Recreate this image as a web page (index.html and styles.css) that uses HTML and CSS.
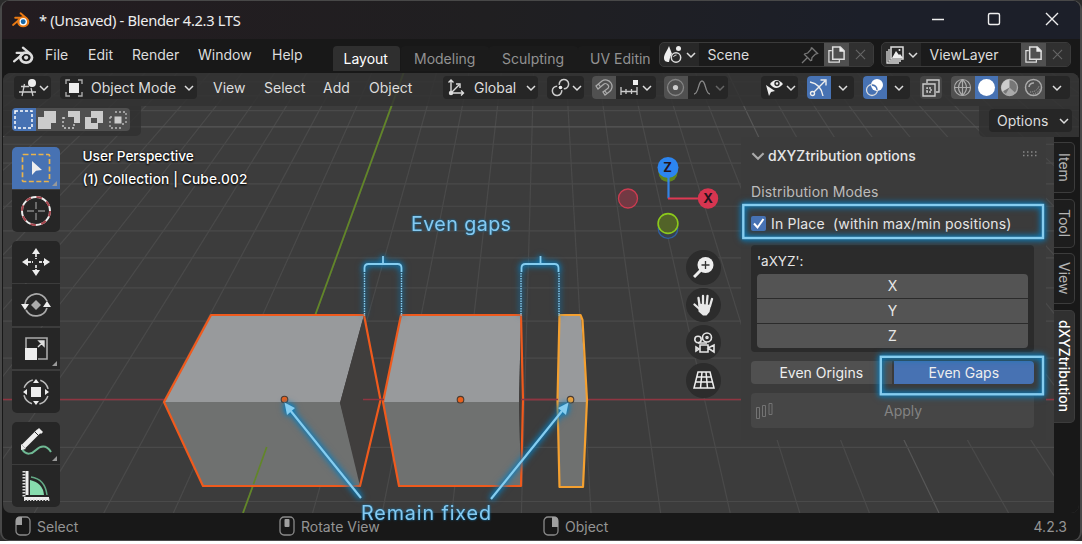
FILE: index.html
```
<!DOCTYPE html>
<html lang="en">
<head>
<meta charset="utf-8">
<title>Blender 4.2.3 LTS</title>
<link rel="stylesheet" href="styles.css">
</head>
<body>
<svg class="defs" width="0" height="0">
  <symbol id="chev" viewBox="0 0 10 10"><path d="M1 3l4 4 4-4" fill="none" stroke="currentColor" stroke-width="1.5"/></symbol>
  <symbol id="copy" viewBox="0 0 20 20"><path d="M5 6H2v12h11v-3" fill="none" stroke="#ddd" stroke-width="1.3"/><path d="M6 2h8l4 4v9H6z" fill="none" stroke="#ddd" stroke-width="1.6"/><path d="M13 1.5V7h5.500z" fill="#eee"/></symbol>
  <symbol id="close" viewBox="0 0 12 12"><path d="M1 1l10 10M11 1L1 11" fill="none" stroke="currentColor" stroke-width="1.2"/></symbol>
  <symbol id="blender" viewBox="0 0 20 18"><path d="M1 14.500L9 8M3.500 6.500H12M9.500 1.500L16 7" fill="none" stroke="currentColor" stroke-width="2.200" stroke-linecap="round"/><ellipse cx="12.500" cy="11" rx="5.600" ry="4.800" fill="none" stroke="currentColor" stroke-width="2.600"/></symbol>
</svg>
<div class="window">
  <header class="titlebar">
    <svg class="logo orange" width="18" height="16" viewBox="0 0 20 18"><use href="#blender"/><circle cx="12.500" cy="11" r="4.300" fill="#fff"/><circle cx="12.500" cy="11" r="2.800" fill="#1768a8"/></svg>
    <span class="title">* (Unsaved) - Blender 4.2.3 LTS</span>
    <svg class="winbtns" width="128" height="16" viewBox="0 0 128 16" fill="none" stroke="#eee" stroke-width="1.400"><path d="M1 8.500h12M115 2l12 12M127 2L115 14"/><rect x="57.500" y="2.500" width="11" height="11" rx="1.500"/></svg>
  </header>

  <nav class="topbar">
    <svg class="applogo" width="21" height="19" viewBox="0 0 20 18"><use href="#blender"/><circle cx="12.500" cy="11" r="2" fill="#ddd"/></svg>
    <span class="menu m-file">File</span><span class="menu m-edit">Edit</span><span class="menu m-render">Render</span><span class="menu m-window">Window</span><span class="menu m-help">Help</span>
    <div class="tabs"><span class="tab active">Layout</span><span class="tab t2">Modeling</span><span class="tab t3">Sculpting</span><span class="tab t4">UV Editing</span></div>
    <div class="selector scene">
      <span class="pick"><svg width="20" height="20" viewBox="0 0 20 20"><path d="M6 1C4 6 1 9 1 13c0 3 2 4 5 4 1-5 2-7 3-8z" fill="#eee"/><circle cx="15.500" cy="3.500" r="2.500" fill="#eee"/><circle cx="13" cy="12.500" r="4.700" fill="#282828" stroke="#ddd" stroke-width="1.500"/><path d="M10.500 12a3 3 0 0 1 3-2" stroke="#ddd" fill="none"/></svg><svg class="chev"><use href="#chev"/></svg></span>
      <span class="field">Scene<svg width="18" height="18" viewBox="0 0 18 18" fill="none" stroke="#777" stroke-width="1.300"><path d="M1 17l5.500-5.500M3 8l7 7M10.500 1.500l6 6-2 .5-3.500 3.500-.5 3.500M3.200 8l3.500-1L10 3.500l.5-2"/></svg></span>
      <span class="new"><svg width="19" height="19"><use href="#copy"/></svg></span>
      <span class="del"><svg width="11" height="11"><use href="#close"/></svg></span>
    </div>
    <div class="selector layer">
      <span class="pick"><svg width="20" height="20" viewBox="0 0 20 20" fill="none" stroke="#ddd" stroke-width="1.300"><path d="M2 6v12h12M4 4v12h12"/><rect x="6" y="2" width="12" height="12" stroke-width="1.500"/><path d="M7 13l4-7 3 4 1-1 3 4z" fill="#eee" stroke="none"/><circle cx="14.500" cy="5" r="1" fill="#eee" stroke="none"/></svg><svg class="chev"><use href="#chev"/></svg></span>
      <span class="field">ViewLayer</span>
      <span class="new"><svg width="19" height="19"><use href="#copy"/></svg></span>
      <span class="del"><svg width="11" height="11"><use href="#close"/></svg></span>
    </div>
  </nav>

  <main class="viewport">
    <svg class="scene3d" width="1076" height="440" viewBox="3 73 1076 440">
      <g id="grid" fill="none" stroke="#4a4a4a" stroke-width="1.200"></g>
      <path d="M3 399.500H1054" stroke="#8f3541" stroke-width="1.500"/>
      <path d="M403.500 73L243 513" stroke="#628629" stroke-width="1.800"/>
      <g stroke-linejoin="round">
        <path d="M211 315h153L340 403H164z" fill="#989a9c"/><path d="M164 402h176l21 84H203z" fill="#6f7170"/><path d="M364 315l16 83-20 88-20-83z" fill="#403e3d"/>
        <path d="M401 315h120l-2 88H383z" fill="#989a9c"/><path d="M383 402h136l2 84H399z" fill="#6f7170"/><path d="M521 315l2 85-2 86-2-83z" fill="#403e3d"/>
        <path d="M559 315h22l6 88h-29z" fill="#989a9c"/><path d="M558 402h29l-4 85h-24z" fill="#6f7170"/>
        <path d="M266.700 447L253.500 484" stroke="#628629" stroke-width="1.700"/>
        <path d="M211 315H364L380.500 400 360 486H203L164 402zM401 315H521L523 400 521 486H399L383 402z" fill="none" stroke="#ef5a1d" stroke-width="2.200"/>
        <path d="M559.500 315h21l2 5 4.500 80-4 87h-23.500l-2-87z" fill="none" stroke="#f4a030" stroke-width="2.200"/>
      </g>
      <path d="M363 399.500h21M521 399.500h37" stroke="#8f3541" stroke-width="1.300"/>
      <g stroke="#4b3b30" stroke-width="1.100" fill="#e9601c"><circle cx="284.500" cy="399.500" r="3.300"/><circle cx="460.500" cy="399.700" r="3.300"/><circle cx="570.500" cy="399.700" r="3.300" fill="#f0a23a"/></g>
    </svg>

    <div class="header">
      <span class="box w37 ed"><svg width="20" height="20" viewBox="0 0 20 20" fill="none" stroke="#ccc" stroke-width="1.300"><path d="M3 8.500h8M1 14h17M6.500 6L4 18M13 10l2 8"/><circle cx="14" cy="5" r="4" fill="#eee" stroke="none"/></svg><svg class="chev"><use href="#chev"/></svg></span>
      <span class="box mode"><svg width="18" height="18" viewBox="0 0 18 18"><path d="M1 5V1h4M13 1h4v4M17 13v4h-4M5 17H1v-4" fill="none" stroke="#aaa" stroke-width="1.400"/><path d="M4 4h10v10H4z" fill="#eee"/></svg><b>Object Mode</b><svg class="chev"><use href="#chev"/></svg></span>
      <span class="menu h-view">View</span><span class="menu h-select">Select</span><span class="menu h-add">Add</span><span class="menu h-object">Object</span>
      <span class="box global"><svg width="19" height="19" viewBox="0 0 19 19" fill="none" stroke="#ddd" stroke-width="1.400"><path d="M4 3v12h12M4 15L12 7M1.500 4.500L4 2l2.500 2.500M14 12.500l2.500 2.500-2.500 2.500"/><path d="M9 6h4v4"/><circle cx="4" cy="15" r="1.500" fill="#ddd"/></svg><b>Global</b><svg class="chev"><use href="#chev"/></svg></span>
      <span class="box w37 pivot"><svg width="19" height="19" viewBox="0 0 19 19" fill="none" stroke="#ccc" stroke-width="1.500"><path d="M8.300 6.800A4.700 4.700 0 1 1 12.800 10.800M10.700 12.200A4.700 4.700 0 1 1 6.200 8.200"/><circle cx="9.500" cy="9.500" r="1.800" fill="#eee" stroke="none"/></svg><svg class="chev"><use href="#chev"/></svg></span>
      <span class="box snap"><span class="cell lit"><svg width="19" height="19" viewBox="0 0 19 19" fill="none" stroke="#aaa" stroke-width="1.300"><path d="M2 8l6-5c3-2 7-1 9 2s1 7-2 9l-4 3-2-3 4-3c2-1 2-3 1-4s-3-2-4-1l-6 5zM4.500 6l2 3M13 16l-2-3"/></svg></span><svg width="18" height="18" viewBox="0 0 18 18" fill="none" stroke="#ccc" stroke-width="1.300"><path d="M1 8v8M6 10v5M11.500 10v5M17 8v8M1 12.500h16"/><path d="M13 1h5v5h-5z" fill="#eee" stroke="none"/></svg><svg class="chev"><use href="#chev"/></svg></span>
      <span class="box prop"><span class="cell lit"><svg width="19" height="19" viewBox="0 0 19 19"><circle cx="9.500" cy="9.500" r="8" fill="none" stroke="#858585" stroke-width="1.300"/><circle cx="9.500" cy="9.500" r="2.600" fill="#ccc"/></svg></span><svg width="17" height="17" viewBox="0 0 17 17"><path d="M1 15c5 0 4-13 8-13s3 13 8 13" fill="none" stroke="#888" stroke-width="1.300"/></svg><svg class="chev dim"><use href="#chev"/></svg></span>
      <span class="box w37 eye"><svg width="19" height="19" viewBox="0 0 19 19"><path d="M5 6q6-8 13 0-7 8-13 0z" fill="#eee"/><circle cx="12" cy="5.500" r="2.700" fill="#282828"/><circle cx="12" cy="5.500" r="1.200" fill="#eee"/><path d="M1 7l9 6-4 1-2 4z" fill="#eee"/></svg><svg class="chev"><use href="#chev"/></svg></span>
      <span class="box pair giz"><span class="cell blue"><svg width="19" height="19" viewBox="0 0 19 19" fill="none" stroke="#eee" stroke-width="1.400"><path d="M1 4q11 2 13 14M4 15L16 3M11.500 2H17v5.500"/><circle cx="3.500" cy="15.500" r="2" fill="#4772b3"/></svg></span><svg class="chev"><use href="#chev"/></svg></span>
      <span class="box pair ovl"><span class="cell blue"><svg width="19" height="19" viewBox="0 0 19 19"><circle cx="12" cy="7" r="6" fill="#fff"/><circle cx="7" cy="12" r="5.500" fill="none" stroke="#ddd" stroke-width="1.300"/><path d="M7 7a5.500 5.500 0 0 1 5 5" fill="none" stroke="#4772b3" stroke-width="1.300"/></svg></span><svg class="chev"><use href="#chev"/></svg></span>
      <span class="box xray"><svg width="18" height="18" viewBox="0 0 18 18" fill="none" stroke="#ccc" stroke-width="1.400"><path d="M5 4V1h12v12h-3M1 5h12v12H1z"/><path d="M5 13V9h4v4z" stroke-dasharray="2 1"/></svg></span>
      <span class="box shade">
        <span class="cell lit"><svg width="19" height="19" viewBox="0 0 19 19" fill="none" stroke="#aaa" stroke-width="1.200"><circle cx="9.500" cy="9.500" r="8"/><path d="M1.500 9.500h16M9.500 1.500v16M9.500 1.500q-8 8 0 16M9.500 1.500q8 8 0 16"/></svg></span>
        <span class="cell blue"><svg width="19" height="19" viewBox="0 0 19 19"><circle cx="9.500" cy="9.500" r="8.500" fill="#fff"/></svg></span>
        <span class="cell lit"><svg width="19" height="19" viewBox="0 0 19 19"><circle cx="9.500" cy="9.500" r="8" fill="#777" stroke="#aaa" stroke-width="1.300"/><path d="M9.500 9.500V1.500a8 8 0 0 0-7 12z" fill="#ccc"/><path d="M9.500 9.500l6 5.500a8 8 0 0 1-10 1.500z" fill="#aaa"/></svg></span>
        <span class="cell lit"><svg width="19" height="19" viewBox="0 0 19 19" fill="none" stroke="#aaa"><circle cx="9.500" cy="9.500" r="8" stroke-width="1.500"/><path d="M5 9a4.500 4.500 0 0 1 5-4" stroke-width="1.600"/><path d="M6 14q7 0 9-6M9 16q5-1 7-5" stroke-dasharray="1 1"/></svg></span>
        <svg class="chev"><use href="#chev"/></svg>
      </span>
    </div>

    <div class="subheader">
      <div class="selmodes"><div class="row">
        <span class="cell blue"><svg width="19" height="19" viewBox="0 0 19 19"><rect x="1" y="1" width="17" height="17" fill="none" stroke="#fff" stroke-width="1.500" stroke-dasharray="3 2"/></svg></span>
        <span class="cell lit"><svg width="18" height="18"><path d="M6 0h12v12h-5v6H0V6h6z" fill="#ccc"/></svg></span>
        <span class="cell lit"><svg width="18" height="18"><path d="M6 0h12v12h-6V6H6z" fill="#ccc"/><path d="M1 6v11h11v-4M1 7h4" fill="none" stroke="#ccc" stroke-width="1.400" stroke-dasharray="2 2"/></svg></span>
        <span class="cell lit"><svg width="18" height="18"><path d="M6 0h12v12h-5v6H0V6h6zM6 7v5h6V7z" fill="#ccc" fill-rule="evenodd"/></svg></span>
        <span class="cell lit"><svg width="18" height="18"><path d="M5.500 5.500h7v7h-7z" fill="#ccc"/><path d="M6 1h11v11M1 6v11h11M1 6h4M13 13h4" fill="none" stroke="#bbb" stroke-width="1.300" stroke-dasharray="2 2"/></svg></span>
      </div></div>
      <div class="optwrap"><span class="box options">Options<svg class="chev"><use href="#chev"/></svg></span></div>
    </div>

    <div class="stage">
      <div class="toolbar">
        <div class="tgroup">
          <span class="tool on corner"><svg width="30" height="30" viewBox="0 0 30 30"><rect x="1.500" y="1.500" width="27" height="27" fill="none" stroke="#e9b34c" stroke-width="1.700" stroke-dasharray="5 2.500" rx="1"/><path d="M11 8l10 9-6 .8-4 4.200z" fill="#eee"/></svg></span>
          <span class="tool"><svg width="32" height="32" viewBox="0 0 32 32" fill="none"><circle cx="16" cy="16" r="14" stroke="#eee" stroke-width="2"/><circle cx="16" cy="16" r="14" stroke="#a5444c" stroke-width="2" stroke-dasharray="5.500 5.500"/><path d="M16 7v7M16 18v7M7 16h7M18 16h7" stroke="#888" stroke-width="1.400"/></svg></span>
        </div>
        <div class="tgroup">
          <span class="tool"><svg width="30" height="30" viewBox="0 0 30 30"><path d="M15 1l4 6h-8zM15 29l4-6h-8zM1 15l6-4v8zM29 15l-6-4v8z" fill="#eee"/><path d="M15 7v5M15 18v5M7 15h5M18 15h5" stroke="#ddd" stroke-width="1.800" stroke-dasharray="3 1"/></svg></span>
          <span class="tool"><svg width="30" height="30" viewBox="0 0 30 30"><path d="M4 14A11.500 11.500 0 0 1 26 11M26 18A11.500 11.500 0 0 1 5 20" fill="none" stroke="#aaa" stroke-width="1.700"/><path d="M15 10l5 5-5 5-5-5z" fill="#aaa"/><path d="M0 14h8l-4 6zM22 17h8l-4-6z" fill="#eee"/></svg></span>
          <span class="tool corner"><svg width="23" height="23" viewBox="0 0 23 23"><path d="M1 12V1h21v21H13" fill="none" stroke="#aaa" stroke-width="1.600"/><path d="M0 11h12v12H0z" fill="#eee"/><path d="M13 10l5-5M14 4h5v5z" fill="#ddd" stroke="#ddd" stroke-width="1.400"/></svg></span>
          <span class="tool"><svg width="28" height="28" viewBox="0 0 28 28"><circle cx="14" cy="14" r="12.500" fill="none" stroke="#bbb" stroke-width="1.500" stroke-dasharray="12 7.630" stroke-dashoffset="-4"/><path d="M9 9h10v10H9zM14 1l3 4h-6zM14 27l3-4h-6zM1 14l4-3v6zM27 14l-4-3v6z" fill="#eee"/></svg></span>
        </div>
        <div class="tgroup">
          <span class="tool corner"><svg width="32" height="30" viewBox="0 0 32 30"><path d="M2 21c4 7 10 5 14 1s10-6 15 2" fill="none" stroke="#6fb994" stroke-width="2"/><path d="M3.500 18.500L19 3" stroke="#eee" stroke-width="5"/><path d="M1 16l5 5-5 1zM17 2l2-2 4 4-2 2z" fill="#eee"/><path d="M15 4l4 4" stroke="#282828"/></svg></span>
          <span class="tool"><svg width="28" height="31" viewBox="0 0 28 31"><path d="M8 10q13 3 14 15H8z" fill="#87dcae"/><path d="M9 7q14 2 16 18" fill="none" stroke="#63a985" stroke-width="1.500"/><path d="M5 1v24M2 28.500h25" stroke="#eee" stroke-width="3"/><path d="M2 1v27M2 30h26" stroke="#ddd" stroke-width="3" stroke-dasharray="1.400 1.600"/></svg></span>
        </div>
      </div>

      <div class="info"><div>User Perspective</div><div>(1) Collection | Cube.002</div></div>

      <div class="navcol">
        <svg class="gizmo" width="106" height="90" viewBox="615 152 106 90"><circle cx="668" cy="172.500" r="9.500" fill="#60851c"/><circle cx="668" cy="228.500" r="9.800" fill="#38414c" stroke="#315f9f" stroke-width="1.300"/><path d="M668.500 198.500V176" stroke="#3484e4" stroke-width="2.200"/><path d="M668 198.500h36" stroke="#df3953" stroke-width="2.200"/><circle cx="668" cy="167.500" r="10.500" fill="#2c85f0"/><circle cx="708" cy="198.500" r="10.200" fill="#d73550"/><circle cx="628" cy="198.500" r="9.500" fill="#723943" stroke="#cd3c51" stroke-width="1.300"/><circle cx="668" cy="223.500" r="9.900" fill="#526328" stroke="#8cc91c" stroke-width="1.600"/><text x="663.200" y="172" class="axis">Z</text><text x="703.300" y="203" class="axis">X</text></svg>
        <div class="navs">
          <span class="nav"><svg width="22" height="22" viewBox="0 0 22 22"><path d="M1 21l7-7" stroke="#eee" stroke-width="3"/><circle cx="12.500" cy="9" r="8" fill="#eee"/><path d="M8.500 9h8M12.500 5v8" stroke="#333" stroke-width="1.300"/></svg></span>
          <span class="nav"><svg width="22" height="22" viewBox="0 0 22 22"><path d="M6.500 11L5.500 4M10 11V2M13.700 11l.8-9M17 12l2-7M6.500 15l-5-4.500" stroke="#e8e8e8" stroke-width="2.300" stroke-linecap="round"/><path d="M5.400 9.500l12.600 1.500-1.500 7-3 3.500H10l-4.500-4z" fill="#e8e8e8"/></svg></span>
          <span class="nav"><svg width="22" height="22" viewBox="0 0 22 22" fill="none" stroke="#e5e5e5" stroke-width="1.600"><circle cx="14" cy="5.500" r="4.500"/><circle cx="5" cy="7.500" r="3.200"/><path d="M5 11h9M7 13h8v7H7zM15 16l6-3v7z"/><path d="M3 15v4l3-2z"/><circle cx="14" cy="5.500" r="1" /></svg></span>
          <span class="nav"><svg width="22" height="18" viewBox="0 0 22 18" fill="none" stroke="#eee" stroke-width="1.500"><path d="M5 1h12l4 16H1zM4 6h14M2.500 11h17M9 1L7.500 17M13 1l1.500 16"/></svg></span>
        </div>
      </div>

      <aside class="panel">
        <div class="phead"><svg class="chev big"><use href="#chev"/></svg><b>dXYZtribution options</b><svg class="grip" width="14" height="6"><path d="M0 1h14M0 4.500h14" stroke="#888" stroke-width="1.500" stroke-dasharray="1.500 2.500"/></svg></div>
        <div class="plabel">Distribution Modes</div>
        <div class="check"><svg width="15" height="15"><rect width="15" height="15" rx="2" fill="#4772b3"/><path d="M3 7.500l3.500 4L12.500 3" fill="none" stroke="#fff" stroke-width="2"/></svg><span>In Place&nbsp; (within max/min positions)</span></div>
        <div class="pbox"><div class="axyz">'aXYZ':</div><div class="xyz"><span>X</span><span>Y</span><span>Z</span></div></div>
        <div class="even"><span>Even Origins</span><span class="sel">Even Gaps</span></div>
        <div class="apply"><svg width="19" height="18" fill="none" stroke="#737373"><path d="M1.500 5.500h3v11h-3zM7.500 3.500h3v11h-3zM14 1.500h3v11h-3z"/></svg><span>Apply</span></div>
      </aside>

      <div class="sidetabs"><span class="st s1">Item</span><span class="st s2">Tool</span><span class="st s3">View</span><span class="st s4 cur">dXYZtribution</span></div>
    </div>
  </main>

  <footer class="status">
    <svg width="16" height="20" viewBox="0 0 16 20"><rect x="1" y="1" width="14" height="18" rx="4" fill="none" stroke="#8a8a8a" stroke-width="1.300"/><path d="M1 9V4q0-3 3-3h3v8z" fill="#a0a0a0"/></svg><span class="f1">Select</span>
    <svg width="16" height="20" viewBox="0 0 16 20"><rect x="1" y="1" width="14" height="18" rx="4" fill="none" stroke="#8a8a8a" stroke-width="1.300"/><rect x="5.500" y="3" width="5" height="8" rx="1" fill="#a0a0a0"/></svg><span class="f2">Rotate View</span>
    <svg width="16" height="20" viewBox="0 0 16 20"><rect x="1" y="1" width="14" height="18" rx="4" fill="none" stroke="#8a8a8a" stroke-width="1.300"/><path d="M9 1h3q3 0 3 3v7H9z" fill="#a0a0a0"/></svg><span class="f3">Object</span>
    <span class="ver">4.2.3</span>
  </footer>
</div>

<svg class="notes" width="1082" height="544" viewBox="0 0 1082 544">
  <g class="glow" fill="none" stroke="#85cdf0">
    <rect x="743.300" y="205" width="299.700" height="33" stroke-width="2.400"/>
    <rect x="880.800" y="356.800" width="162.200" height="37.500" stroke-width="2.400"/>
    <g stroke-width="1.800"><path d="M364.500 272v-4q0-4 4-4h29q4 0 4 4v4M383 264v-8"/><path d="M521.500 272v-4q0-4 4-4h29q4 0 4 4v4M540.500 264v-8"/></g>
    <path d="M364.500 273v43M401.500 273v43M521 273v43M559 273v43" stroke-width="1.400" stroke-dasharray="1.500 1"/>
    <path d="M361 498L290 410M491 499L562 411" stroke-width="2.200"/>
    <path d="M284.500 402.500l10.500 5.500-8 7zM568.500 402.500l-10.500 5.500 8 7z" fill="#85cdf0" stroke="none"/>
  </g>
  <text class="note" x="411" y="231" textLength="100">Even gaps</text>
  <text class="note" x="361" y="520" textLength="130">Remain fixed</text>
</svg>
<script src="grid.js"></script>
</body>
</html>
```
FILE: styles.css
```
* { box-sizing: border-box; }
body { margin: 0; background: #fff; font-family: Inter, "Liberation Sans", sans-serif; font-size: 14px; color: #ddd; width: 1082px; height: 544px; overflow: hidden; position: relative; }
.defs { position: absolute; }
svg { flex: none; display: block; }
b { font-weight: 400; }
.window { width: 1082px; height: 541px; background: #181818; border: 1px solid #484848; border-right-width: 2px; border-left-width: 2px; border-radius: 9px; display: flex; flex-direction: column; overflow: hidden; box-shadow: 0 0 0 9px #2b2b2b; clip-path: inset(0); }
.titlebar { height: 38px; flex: none; background: linear-gradient(90deg, #231c20, #201f21 45%, #1c1f29 80%); display: flex; align-items: center; padding: 0 21px 0 10px; }
.orange { color: #ea7a13; }
.title { margin-left: 9px; font: 14.700px "Noto Sans", sans-serif; letter-spacing: -.32px; color: #eee; flex: 1; }
.winbtns { margin-top: -2px; }
.topbar { height: 34px; flex: none; display: flex; align-items: flex-start; padding-left: 11px; }
.applogo { color: #ddd; margin: 7px 11px 0 0; }
.menu { line-height: 32px; white-space: nowrap; }
.m-file { width: 43px; }
.m-edit { width: 44px; }
.m-render { width: 66px; }
.m-window { width: 74px; }
.m-help { width: 60.500px; }
.tabs { width: 317px; height: 25px; margin-top: 7px; display: flex; overflow: hidden; line-height: 25px; color: #929292; }
.tab { flex: none; background: #1b1b1b; border-radius: 4px 4px 0 0; padding-left: 13px; }
.tab.active { width: 67.500px; background: #2f2f2f; color: #fff; padding-left: 11px; }
.t2 { width: 88px; margin-left: 1px; }
.t3 { width: 89px; }
.t4 { width: 90px; padding-left: 12px; }
.selector { display: flex; height: 25px; margin-top: 3px; background: #282828; border: 1px solid #3b3b3b; border-radius: 5px; overflow: hidden; }
.scene { width: 215px; margin-left: 9px; }
.layer { width: 190px; margin-left: 7px; }
.pick { width: 39px; display: flex; align-items: center; justify-content: center; gap: 3px; }
.field { flex: 1; background: #1b1b1b; padding: 0 5px 0 9px; display: flex; align-items: center; justify-content: space-between; }
.new { width: 25px; background: #505050; display: grid; place-items: center; }
.del { width: 24px; background: #303030; color: #666; display: grid; place-items: center; }
.chev { width: 10px; height: 10px; color: #ddd; }
.chev.dim { color: #666; }
.chev.big { width: 14px; height: 14px; }
.viewport { height: 440px; margin-left: 1px; width: 1076px; flex: none; position: relative; background: #3c3c3c; border-radius: 8px; overflow: hidden; display: flex; flex-direction: column; }
.scene3d { position: absolute; left: 0; top: 0; }
.header { position: relative; height: 33px; flex: none; background: rgba(50,50,50,.86); display: flex; padding: 3px 0 0 11px; }
.header .menu { line-height: 24px; }
.box { height: 23px; background: #262626; border-radius: 4px; display: flex; align-items: center; overflow: hidden; flex: none; }
.w37 { width: 37px; justify-content: space-between; padding: 0 2px 0 4px; }
.mode { width: 137px; margin-left: 9px; padding: 0 3px 0 5px; }
.mode b { margin-left: 8px; flex: 1; }
.h-view { margin-left: 16px; width: 51px; }
.h-select { width: 59px; }
.h-add { width: 46px; }
.h-object { width: 74px; }
.global { width: 95px; padding: 0 2px 0 4px; }
.global b { margin-left: 8px; flex: 1; }
.pivot { margin-left: 9px; }
.cell { width: 23.500px; height: 23px; display: grid; place-items: center; flex: none; }
.lit { background: #505050; }
.blue { background: #4772b3; }
.snap { width: 64px; margin-left: 8px; gap: 4px; }
.prop { width: 64px; margin-left: 8px; gap: 5px; }
.eye { margin-left: 33px; }
.pair { width: 47px; margin-left: 9px; gap: 7px; }
.xray { width: 22px; margin-left: 10px; background: #454545; justify-content: center; }
.shade { width: 119px; margin-left: 9px; }
.shade .chev { margin-left: 7px; }
.subheader { position: relative; height: 31px; flex: none; display: flex; justify-content: space-between; }
.selmodes { width: 138px; height: 30px; background: rgba(48,48,48,.8); border-radius: 0 0 5px 0; padding: 2px 0 0 9px; }
.row { display: flex; width: 118px; border-radius: 4px; overflow: hidden; }
.optwrap { width: 100px; background: rgba(48,48,48,.8); border-radius: 0 0 0 5px; padding: 3px 0 0 10px; }
.options { width: 83px; padding: 0 3px 0 8px; justify-content: space-between; }
.stage { position: relative; height: 376px; flex: none; display: flex; }
.stage > * { flex: none; }
.toolbar { width: 48px; margin: 10px 0 0 9px; display: flex; flex-direction: column; gap: 9px; }
.tgroup { display: flex; flex-direction: column; gap: 1.500px; border-radius: 5px; overflow: hidden; }
.tool { position: relative; height: 41.800px; background: #262626; display: grid; place-items: center; }
.tool.on { background: #4772b3; }
.corner::after { content: ""; position: absolute; right: 3px; bottom: 3px; border-left: 5px solid transparent; border-bottom: 5px solid #999; }
.info { width: 555px; padding: 8px 0 0 22.500px; color: #fff; line-height: 22.500px; font-size: 13.700px; font-weight: 500; text-shadow: 0 1px 2px #000, 0 0 2px #111; }
.info div { letter-spacing: -.05px; }
.info div + div { letter-spacing: .12px; }
.navcol { width: 126px; margin-top: 15px; }
.axis { font: 700 13px Inter, sans-serif; fill: #26141d; }
.navs { margin: 8px 0 0 71px; width: 35px; display: flex; flex-direction: column; gap: 3px; }
.nav { width: 35px; height: 34.700px; border-radius: 50%; background: #2c2c2c; display: grid; place-items: center; }
.panel { width: 305px; height: 303px; background: #3b3b3b; padding: 9px 12px 0 10px; }
.phead { height: 19px; display: flex; align-items: center; color: #e6e6e6; }
.phead b { margin: 0 0 0 3px; flex: 1; font-weight: 500; letter-spacing: .05px; }
.phead .chev { color: #aaa; }
.grip { margin-top: -4px; margin-right: -3px; }
.plabel { margin-top: 17px; line-height: 20px; color: #bdbdbd; letter-spacing: .15px; }
.check { margin-top: 11px; height: 20px; display: flex; align-items: center; gap: 5px; color: #e6e6e6; letter-spacing: .18px; white-space: nowrap; }
.pbox { margin-top: 12px; height: 107px; background: #2b2b2b; border-radius: 4px; padding: 7px 6px 0; color: #e6e6e6; }
.axyz { line-height: 18px; margin-bottom: 4px; font-size: 13.500px; }
.xyz { display: flex; flex-direction: column; gap: 1px; border-radius: 4px; overflow: hidden; text-align: center; line-height: 24px; }
.xyz span { background: #545454; height: 24px; }
.even { margin-top: 9px; height: 23px; display: flex; gap: 2px; border-radius: 4px; overflow: hidden; line-height: 23px; text-align: center; color: #eee; }
.even span { flex: 1; background: #505050; }
.even .sel { background: #4772b3; }
.apply { margin-top: 9px; height: 35px; background: #464646; border-radius: 4px; display: flex; align-items: center; color: #838383; padding-left: 4px; }
.apply span { margin-left: 110px; }
.sidetabs { margin-left: 8px; width: 25px; background: #181818; padding-top: 5px; display: flex; flex-direction: column; gap: 5.500px; }
.st { writing-mode: vertical-rl; width: 21px; border: 1px solid #3c3c3c; border-left: 0; border-radius: 0 5px 5px 0; line-height: 20px; text-align: center; color: #b5b5b5; background: #1d1d1d; }
.s1 { height: 51px; }
.s2 { height: 49px; }
.s3 { height: 51px; }
.s4 { height: 113px; font-weight: 500; font-size: 13.800px; }
.cur { background: #303030; color: #fff; }
.status { height: 26px; display: flex; align-items: center; padding-left: 13px; color: #949494; }
.status span { margin-left: 6px; }
.f1 { width: 242px; }
.f2 { width: 242px; }
.f3 { width: 120px; }
.status .ver { margin-left: auto; margin-right: 13px; }
.notes { position: absolute; left: 0; top: 0; }
.glow { filter: drop-shadow(0 0 3px #0784c8) drop-shadow(0 0 2px #0878b6); }
.note { font-family: Inter, sans-serif; font-size: 19.700px; fill: #85c9f0; filter: drop-shadow(0 0 1px #0878b6); }
```
FILE: grid.js
```
// Floor grid in one-point perspective: lines converge at (VX, VY).
const VX = 544.3, VY = -310, NEAR = 513;
const grid = document.getElementById('grid');
function line(x1, y1, x2, y2, major) {
  const p = document.createElementNS('http://www.w3.org/2000/svg', 'path');
  p.setAttribute('d', `M${x1} ${y1}L${x2} ${y2}`);
  if (major) p.setAttribute('stroke', '#575757');
  grid.appendChild(p);
}
for (let k = -14; k <= 21; k++) line(VX, VY, 243 + 69.6 * k, NEAR, Math.abs(k) === 10);
for (let j = -2; j <= 13; j++) {
  const y = VY + 1 / (0.0014085 + 0.0000881 * j);
  line(0, y, 1082, y, j === 10);
}
```
